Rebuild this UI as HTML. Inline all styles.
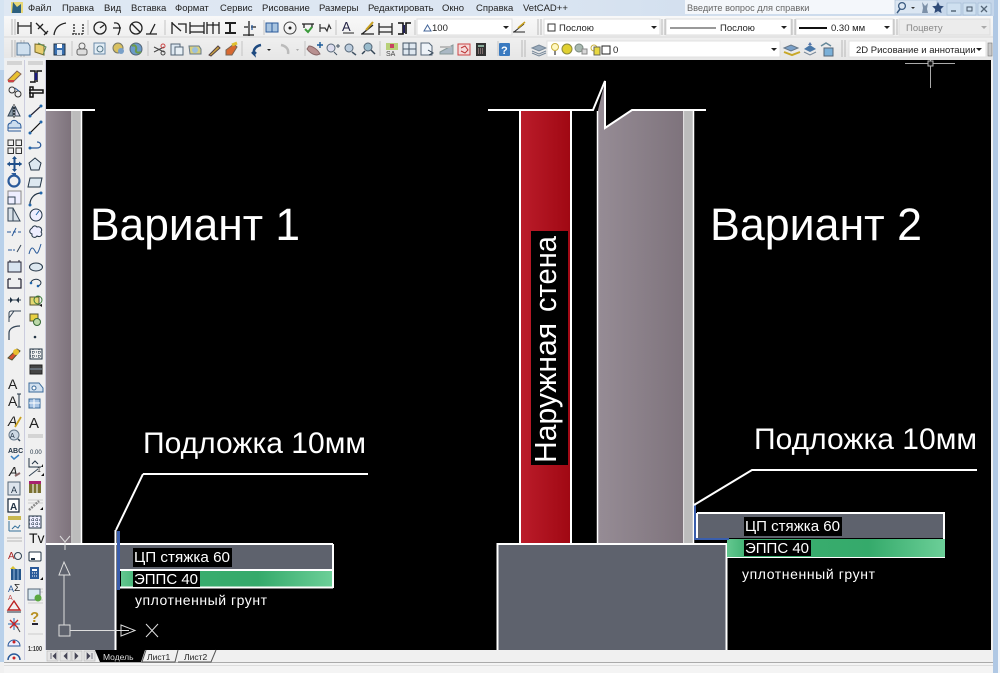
<!DOCTYPE html>
<html><head><meta charset="utf-8"><style>
html,body{margin:0;padding:0;background:#f0f0f0;width:1000px;height:673px;overflow:hidden}
svg{display:block;filter:blur(.35px)}
text{font-family:"Liberation Sans",sans-serif}
.m{font-size:9.5px;fill:#222}
.i{fill:none;stroke:#222;stroke-width:1.3}
.w{stroke:#fff;stroke-width:2;fill:none}
.u{stroke:#ddd;stroke-width:1;fill:none}
</style></head><body>
<svg width="1000" height="673" viewBox="0 0 1000 673" xmlns="http://www.w3.org/2000/svg">
<defs>
<linearGradient id="mb" x1="0" x2="1" y1="0" y2="0"><stop offset="0" stop-color="#dfe8f3"/><stop offset=".5" stop-color="#dce6f2"/><stop offset="1" stop-color="#c5d6ea"/></linearGradient>
<linearGradient id="tb" x1="0" x2="0" y1="0" y2="1"><stop offset="0" stop-color="#f8f8f8"/><stop offset="1" stop-color="#e6e6e6"/></linearGradient>
<linearGradient id="wl" x1="0" x2="1" y1="0" y2="0"><stop offset="0" stop-color="#968c95"/><stop offset="1" stop-color="#7e737c"/></linearGradient>
<linearGradient id="rd" x1="0" x2="1" y1="0" y2="0"><stop offset="0" stop-color="#bb1c2a"/><stop offset="1" stop-color="#a00813"/></linearGradient>
<linearGradient id="gr" x1="0" x2="1" y1="0" y2="0"><stop offset="0" stop-color="#64c890"/><stop offset=".1" stop-color="#3cae70"/><stop offset=".65" stop-color="#35aa6b"/><stop offset="1" stop-color="#6ccf98"/></linearGradient>
</defs>

<!-- window frame -->
<rect width="1000" height="673" fill="#f0f0f0"/>
<rect x="0" y="0" width="5" height="662" fill="#b9d1ea"/>
<rect x="993" y="0" width="5" height="673" fill="#b0c8e4"/>
<rect x="998" y="0" width="2" height="673" fill="#f4f7fb"/>
<rect x="0" y="0" width="5" height="70" fill="#d6e4f2"/>

<!-- menu -->
<rect x="4" y="0" width="990" height="16" fill="url(#mb)"/>
<rect x="11" y="2" width="12" height="11" fill="#e8d878"/>
<path d="M13 2l4 5 4-3v9H12z" fill="#2c5f7e"/>
<text class="m" y="11"><tspan x="28">Файл</tspan><tspan x="62">Правка</tspan><tspan x="104">Вид</tspan><tspan x="131">Вставка</tspan><tspan x="175">Формат</tspan><tspan x="220">Сервис</tspan><tspan x="262">Рисование</tspan><tspan x="319">Размеры</tspan><tspan x="368">Редактировать</tspan><tspan x="442">Окно</tspan><tspan x="476">Справка</tspan><tspan x="523">VetCAD++</tspan></text>
<rect x="685" y="0" width="210" height="14" fill="#f4f7fb"/>
<text x="687" y="11" font-size="9.2" fill="#666">Введите вопрос для справки</text>
<rect x="895" y="0" width="42" height="14" fill="#dbe6f2" stroke="#a8bcd4" stroke-width=".7"/>
<circle cx="902" cy="6" r="3.4" fill="none" stroke="#3a5a80" stroke-width="1.3"/><path d="M900 9l-3 4" stroke="#3a5a80" stroke-width="1.5"/>
<path d="M911 7h4l-2 2z" fill="#333"/>
<path d="M922 2l3 4 3-3-1 6 1 4h-6l1-5z" fill="#7c90a8"/>
<path d="M938 2l1.800 3.800 4 .5-3 2.800.8 4-3.600-2-3.600 2 .8-4-3-2.800 4-.5z" fill="#2f4b78"/>
<rect x="947" y="3" width="14" height="12" fill="#cfe0f0" stroke="#9fb6d0" stroke-width=".6"/><rect x="963" y="3" width="13" height="12" fill="#cfe0f0" stroke="#9fb6d0" stroke-width=".6"/><rect x="978" y="3" width="13" height="12" fill="#cfe0f0" stroke="#9fb6d0" stroke-width=".6"/>
<path d="M951 11h5" stroke="#456" stroke-width="1.300"/><rect x="967" y="7" width="5" height="4" fill="none" stroke="#456"/><path d="M981 6l6 6m0-6l-6 6" stroke="#567" stroke-width="1.300"/>

<!-- toolbars bg -->
<rect x="4" y="16" width="989" height="44" fill="url(#tb)"/>
<path d="M4 37h989" stroke="#d8d8d8"/>
<path d="M12 19v16M15 19v16M12 40v17M15 40v17M538 19v16M541 19v16M662 19v16M665 19v16M792 19v16M795 19v16M894 19v16M897 19v16M21 40v17M24 40v17M522 40v17M525 40v17M842 40v17M845 40v17" stroke="#b8b8b8"/>
<path d="M88 20v15M165 20v15M264 20v15M336 20v15M415 20v15M72 41v15M148 41v15M242 41v15M305 41v15M380 41v15M498 41v15" stroke="#c4c4c4"/>

<!-- toolbar 1 icons -->
<g class="i">
<path d="M18 22v12M31 22v12M18 26h13"/>
<path d="M36 23l11 11M38 29l5-5M44 35l4-4"/>
<path d="M54 35c1-8 6-11 12-12"/>
<path d="M72 34h12M74 24v10M83 24v10" stroke-dasharray="2 1"/>
<circle cx="100" cy="28" r="6"/><path d="M100 28l4-3"/>
<path d="M114 23c5-1 8 4 4 12M113 28h8"/>
<circle cx="136" cy="28" r="6"/><path d="M132 24l8 8"/>
<path d="M146 34h11M150 34l5-10"/>
<path d="M172 22v12M178 24h8v9"/><path d="M172 23l9 8z" fill="#d8b820"/>
<path d="M190 22v12M204 22v12M190 26h14"/><path d="M190 32h14"/>
<path d="M207 22v12M213 22v12M219 22v12M207 25h12"/>
<path d="M225 23h11M225 33h11M230 23v10" stroke-width="2"/>
<path d="M249 21v15M243 35h11M244 27h4M251 27h5" /><path d="M252 25v5" stroke="#2a5a9a"/>
</g>
<g>
<rect x="266" y="23" width="12" height="9" fill="#a8c4e0" stroke="#2a5a9a"/><path d="M272 23v9" stroke="#2a5a9a"/>
<circle cx="290" cy="28" r="6" fill="none" stroke="#444"/><circle cx="290" cy="28" r="1.500" fill="#222"/>
<path d="M302 24h12M304 24v4M312 24v4" stroke="#222" stroke-width="1.300" fill="none"/><path d="M305 29l3 3 4-5" stroke="#3a9a3a" stroke-width="2" fill="none"/>
<path d="M320 24v8M320 28h5l2 3 2-6 2 4" stroke="#333" fill="none" stroke-width="1.200"/>
<text x="342" y="31" font-size="13" fill="#224">A</text><path d="M343 33h11" stroke="#222"/>
<path d="M361 34h13M362 34l11-9" stroke="#222" stroke-width="1.300" fill="none"/><path d="M366 30l7-8" stroke="#c8a020" stroke-width="2"/>
<path d="M379 23v12M392 23v12M379 27h13M379 32h13" stroke="#222" stroke-width="1.300" fill="none"/>
<path d="M398 23h5v11h-5M411 23h-5v11" fill="none" stroke="#111" stroke-width="1.600"/><path d="M404 25v8" stroke="#225" stroke-width="2"/>
</g>
<rect x="417" y="19" width="95" height="16" fill="#fff" stroke="#ddd"/>
<path d="M424 31l3.500-6 3.500 6z" fill="none" stroke="#44669a"/>
<text x="432" y="31" font-size="9.500" fill="#222">100</text>
<path d="M503 26h6l-3 3z" fill="#222"/>
<path d="M513 32h12M514 32l10-8" stroke="#222" fill="none"/><path d="M518 28l7-6" stroke="#c8a020" stroke-width="1.500"/>

<!-- layer property combos -->
<rect x="544" y="19" width="116" height="16" fill="#fff" stroke="#ddd"/>
<rect x="548" y="24" width="7" height="7" fill="#fff" stroke="#333"/>
<text x="559" y="31" font-size="9.500" fill="#222">Послою</text>
<path d="M651 26h6l-3 3z" fill="#222"/>
<rect x="666" y="19" width="125" height="16" fill="#fff" stroke="#ddd"/>
<path d="M670 28h46" stroke="#333"/>
<text x="720" y="31" font-size="9.500" fill="#222">Послою</text>
<path d="M781 26h6l-3 3z" fill="#222"/>
<rect x="796" y="19" width="97" height="16" fill="#fff" stroke="#ddd"/>
<path d="M799 28h28" stroke="#111" stroke-width="2"/>
<text x="831" y="31" font-size="9.500" fill="#222">0.30 мм</text>
<path d="M884 26h6l-3 3z" fill="#222"/>
<rect x="899" y="19" width="91" height="16" fill="#ececec" stroke="#ddd"/>
<text x="906" y="31" font-size="9.500" fill="#888">Поцвету</text>
<path d="M981 26h6l-3 3z" fill="#aaa"/>

<!-- toolbar 2 icons -->
<g>
<path d="M17 43h11l2 3v9H17z" fill="#cfe0ef" stroke="#5a7a9a"/>
<path d="M35 44l9 1v10l-9-3z" fill="#e8cf70" stroke="#7a6a2a"/><path d="M38 43l8 4-3 8" fill="none" stroke="#5a8a5a"/>
<rect x="54" y="44" width="11" height="11" fill="#3a70b0" stroke="#234"/><rect x="57" y="44" width="5" height="4" fill="#fff"/><rect x="57" y="50" width="5" height="5" fill="#cde"/>
<circle cx="82" cy="46" r="3" fill="none" stroke="#666"/><rect x="77" y="49" width="10" height="6" rx="2" fill="#ddd" stroke="#666"/>
<rect x="94" y="43" width="11" height="11" fill="#e4eef6" stroke="#6a8aa8"/><circle cx="100" cy="49" r="3" fill="none" stroke="#578"/>
<circle cx="118" cy="48" r="5" fill="#d8c060" stroke="#776"/><circle cx="121" cy="51" r="3" fill="#7aa0c8"/>
<circle cx="136" cy="49" r="6" fill="#6a9ac8" stroke="#567"/><path d="M132 46c3-2 5 1 4 4-1 3 3 3 5 2" stroke="#6a9a4a" stroke-width="2" fill="none"/>
<path d="M154 47l10 5M154 52l10-5" stroke="#444" fill="none"/><circle cx="163" cy="46" r="2" fill="none" stroke="#c44"/><circle cx="163" cy="53" r="2" fill="none" stroke="#444"/>
<rect x="171" y="44" width="9" height="11" fill="#dde8f2" stroke="#567"/><rect x="175" y="47" width="8" height="8" fill="#e8f0f6" stroke="#567"/>
<path d="M189 46h10l2 3v5h-11z" fill="#d8d080" stroke="#678"/><circle cx="195" cy="50" r="3" fill="#9cc0dc"/>
<path d="M209 55l9-9 2 2-9 8z" fill="#c8a040" stroke="#544"/>
<path d="M226 50l8-6 3 3-5 8h-6z" fill="#d86830" stroke="#765"/><path d="M232 45l5-2" stroke="#e0c030" stroke-width="3"/>
<path d="M261 45c-5 1-8 4-7 9l-2-2m2 2l2-2" fill="none" stroke="#1e4a80" stroke-width="2.500"/>
<path d="M267 49h4l-2 2z" fill="#222"/>
<path d="M281 45c5 1 8 4 7 9" fill="none" stroke="#bbb" stroke-width="2.500"/>
<path d="M296 49h3l-1.500 2z" fill="#aaa"/>
<path d="M309 46c4 0 9 4 11 8l-3 1c-4 0-8-3-10-6z" fill="#b89090" stroke="#866"/><path d="M317 45h6m-3-3v6" stroke="#1a5a9a" stroke-width="1.400"/>
<circle cx="331" cy="48" r="4" fill="#dde" stroke="#567"/><path d="M334 52l3 3M336 46h4m-2-2v4" stroke="#456"/>
<circle cx="349" cy="48" r="4" fill="#bcd" stroke="#567"/><path d="M352 52l4 3" stroke="#456" stroke-width="1.500"/>
<circle cx="368" cy="47" r="4" fill="#9bc" stroke="#567"/><path d="M365 51l-3 3M371 50l4 4" stroke="#345" stroke-width="1.500"/>
<rect x="386" y="43" width="12" height="7" fill="#b8d078"/><rect x="390" y="44" width="4" height="4" fill="#c84060"/><text x="386" y="56" font-size="7" fill="#444">SA</text>
<rect x="403" y="43" width="13" height="12" fill="#dfe8f0" stroke="#456"/><path d="M403 49h13M409 43v12" stroke="#456"/>
<path d="M421 43h8l3 3v9h-11z" fill="#eef3f8" stroke="#567"/><path d="M428 50l5 3-4 2" stroke="#345" fill="none"/>
<path d="M440 52l13-7v9h-13z" fill="#aab8c4" stroke="#899"/><path d="M440 47h11" stroke="#bbb" stroke-width="2"/>
<rect x="458" y="44" width="12" height="11" fill="#f4dada" stroke="#c44"/><path d="M461 48l4-2 3 4-3 3-4-2" stroke="#b33" fill="none"/>
<rect x="476" y="43" width="10" height="13" fill="#333"/><rect x="478" y="45" width="6" height="2" fill="#8a9"/><path d="M478 49h6M478 51h6M478 53h6" stroke="#caa" stroke-dasharray="1 1"/>
<rect x="499" y="43" width="11" height="13" rx="1" fill="#3a7ac0"/><text x="501" y="54" font-size="11" font-weight="bold" fill="#fff">?</text>
<path d="M532 48l7-3 7 3-7 3z" fill="#9ab" stroke="#789"/><path d="M532 51l7 3 7-3M532 53l7 3 7-3" stroke="#789" fill="none"/>
</g>
<rect x="547" y="41" width="233" height="16" fill="#fff" stroke="#e0e0e0"/>
<circle cx="555" cy="47" r="3.500" fill="#fff8c0" stroke="#c8b040"/><path d="M555 51v4" stroke="#888" stroke-width="2"/>
<circle cx="567" cy="49" r="5" fill="#e0d030" stroke="#8a8a40"/>
<circle cx="579" cy="48" r="4" fill="#a8b8b0" stroke="#7a8a80"/><rect x="582" y="49" width="5" height="5" fill="#d8d8d8" stroke="#888"/>
<circle cx="594" cy="48" r="3" fill="none" stroke="#c8b040"/><rect x="594" y="47" width="6" height="8" fill="#e8d840" stroke="#665"/>
<rect x="602" y="46" width="8" height="8" fill="#fff" stroke="#222"/>
<text x="613" y="53" font-size="9.500" fill="#222">0</text>
<path d="M771 48h6l-3 3z" fill="#222"/>
<path d="M784 48l7-3 7 3-7 3z" fill="#7aa0c8" stroke="#678"/><path d="M784 52l8 3 8-3" stroke="#c8a828" stroke-width="2" fill="none"/>
<path d="M804 49l6-4 6 4-6 3z" fill="#4a78a8"/><path d="M804 52l6 3 6-3" stroke="#789" fill="none"/><path d="M808 45l2-3 2 3" fill="#57a"/>
<rect x="824" y="48" width="9" height="8" fill="#7ab0d8" stroke="#567"/><path d="M821 46l5-3 5 3" fill="none" stroke="#689" stroke-width="1.500"/>
<rect x="849" y="41" width="137" height="16" fill="#fff" stroke="#e0e0e0"/>
<text x="856" y="53" font-size="9.500" fill="#222">2D Рисование и аннотации</text>
<path d="M976 48h6l-3 3z" fill="#222"/>
<rect x="988" y="43" width="4" height="13" fill="#c8c8c8" stroke="#777" stroke-width=".6"/>

<!-- left palette -->
<rect x="4" y="58" width="42" height="604" fill="#ecf0f4"/>
<rect x="5" y="60" width="19" height="602" fill="#f0f0f0"/>
<rect x="26" y="60" width="19" height="602" fill="#f0f0f0"/>
<path d="M24.500 60v600M45.500 60v590" stroke="#ccd" stroke-width="1"/>
<path d="M7 62h15M7 64h15M28 62h15M28 64h15" stroke="#b8b8b8"/>

<!-- col 1 icons -->
<g>
<path d="M8 80l9-9 4 3-8 8h-4z" fill="#e8c030" stroke="#865"/><path d="M8 81h6" stroke="#c44" stroke-width="2"/>
<circle cx="12" cy="90" r="3" fill="none" stroke="#333"/><circle cx="18" cy="94" r="3" fill="none" stroke="#333"/><path d="M15 88l4 3" stroke="#2a5a9a"/>
<path d="M14 104v14" stroke="#333" stroke-dasharray="2 1"/><path d="M13 106l-5 10h5z" fill="#8a9aa8" stroke="#345"/><path d="M15 106l5 10h-5z" fill="#dde" stroke="#345"/>
<path d="M8 131v-5c0-3 3-3 3-3 0-3 5-4 7 0 3 0 3 3 3 5h-13zM8 131h13" fill="#cde" stroke="#2a5a9a"/>
<g fill="none" stroke="#333"><rect x="8" y="140" width="5.500" height="5.500"/><rect x="16" y="140" width="5.500" height="5.500"/><rect x="8" y="148" width="5.500" height="5.500"/><rect x="16" y="148" width="5.500" height="5.500"/></g>
<path d="M14.500 157v14M7.500 164h14" stroke="#1f4f8a" stroke-width="2"/><path d="M14.500 156l-2.500 3h5zM14.500 172l-2.500-3h5zM7 164l3-2.500v5zM22 164l-3-2.500v5z" fill="#1f4f8a"/>
<circle cx="14" cy="181" r="5.500" fill="none" stroke="#2a5a9a" stroke-width="2.200"/><path d="M11 173h5v4z" fill="#2a5a9a"/>
<rect x="8" y="191" width="13" height="13" fill="#eef" stroke="#888"/><rect x="8" y="197" width="7" height="7" fill="none" stroke="#345"/>
<path d="M8 221v-13h5l7 13z" fill="#d8e0e8" stroke="#345"/><path d="M13 208v13" stroke="#345"/>
<path d="M7 232h4m2 0h3m2 0h3" stroke="#2a5a9a"/><path d="M16 228l-4 8" stroke="#2a5a9a"/>
<path d="M8 250h4m1 0h2" stroke="#2a5a9a"/><path d="M17 252l4-7" stroke="#345"/>
<rect x="8" y="262" width="13" height="10" fill="#d8e4f0" stroke="#223"/><path d="M10 262v-2M19 262v-2" stroke="#223"/>
<path d="M8 279v9h13v-9M8 279h3M21 279h-3" fill="none" stroke="#223" stroke-width="1.200"/>
<path d="M8 300h13" stroke="#345"/><path d="M10 297l3 3-3 3zM19 297l-3 3 3 3z" fill="#234"/>
<path d="M9 322v-9c0-1 1-2 2-2h10M9 318l5-7" fill="none" stroke="#345"/>
<path d="M9 340v-7c0-4 4-7 11-7" fill="none" stroke="#345" stroke-width="1.200"/>
<path d="M8 358l9-9 3 2-8 9z" fill="#d85030" stroke="#553"/><circle cx="16" cy="352" r="3" fill="#e8c030"/>
</g>
<!-- col 2 icons -->
<g>
<path d="M30 71h5v11h-5M42 71h-5v11" fill="none" stroke="#111" stroke-width="1.500"/><path d="M36 73v7" stroke="#1a1a80" stroke-width="2.400"/>
<path d="M29 90h14v3h-14M33 90v-3h-3v10h3v-4" fill="none" stroke="#111" stroke-width="1.500"/>
<path d="M30 116l11-10" stroke="#223" stroke-width="1.200"/><circle cx="30" cy="116" r="1.500" fill="#26a"/><circle cx="41" cy="106" r="1.500" fill="#26a"/>
<path d="M30 133l11-11" stroke="#111" stroke-width="1.200"/><circle cx="30" cy="133" r="1.500" fill="#26a"/><circle cx="41" cy="122" r="1.500" fill="#26a"/>
<path d="M29 148h8c5 0 5-6 0-6" fill="none" stroke="#2a5a9a" stroke-width="1.300"/><circle cx="30" cy="148" r="1.500" fill="#26a"/>
<path d="M35 158l6 5-2 7h-8l-2-7z" fill="#dde8f0" stroke="#234"/>
<path d="M30 178h12l-2 9h-12z" fill="#dde8f0" stroke="#234"/>
<path d="M30 204c0-6 5-11 11-11" fill="none" stroke="#234" stroke-width="1.200"/><circle cx="30" cy="205" r="1.500" fill="#26a"/><circle cx="41" cy="193" r="1.500" fill="#26a"/>
<circle cx="36" cy="215" r="6" fill="#eef" stroke="#234"/><path d="M36 215l3-4" stroke="#26a"/>
<path d="M32 228c-3 2-3 5 0 6-1 4 4 4 5 2 4 2 6-2 4-4 2-3-1-6-4-5-2-2-4-1-5 1z" fill="#eef" stroke="#234"/>
<path d="M29 254c2-8 4-7 6-3s3 3 6-7" fill="none" stroke="#2a5a9a"/>
<ellipse cx="36" cy="267" rx="6.500" ry="4" fill="#dde8f0" stroke="#234"/>
<path d="M31 283a5 3.500 0 1 1 7 3" fill="none" stroke="#234"/><circle cx="31" cy="283" r="1.300" fill="#26a"/><circle cx="38" cy="286" r="1.300" fill="#26a"/>
<rect x="30" y="297" width="9" height="8" fill="#e4d870" stroke="#553"/><circle cx="38" cy="300" r="4" fill="none" stroke="#3a7a3a"/><path d="M39 305l3 2v-3z" fill="#111"/>
<rect x="30" y="314" width="8" height="7" fill="#e8d040" stroke="#553"/><circle cx="37" cy="322" r="3.500" fill="#bcd8a8" stroke="#363"/>
<circle cx="35" cy="337" r="1.300" fill="#234"/>
<g fill="none" stroke="#234"><rect x="30" y="349" width="12" height="10"/><path d="M30 352h12M30 356h12M33 349v10M39 349v10" stroke-dasharray="1 1"/></g>
<rect x="30" y="365" width="12" height="9" fill="#444" stroke="#222"/><path d="M30 369h12" stroke="#89a"/>
<path d="M29 383h10l4 5v4H29z" fill="#d0dfee" stroke="#3a6a9a"/><circle cx="34" cy="388" r="2" fill="#fff" stroke="#3a6a9a"/>
<rect x="29" y="399" width="11" height="9" fill="#a8c4e4" stroke="#3a6a9a"/><path d="M29 403h11M34 399v9" stroke="#fff"/>
<text x="29" y="428" font-size="15" fill="#222">A</text>
</g>
<path d="M28 435h15M28 437h15" stroke="#b8b8b8"/>
<g>
<text x="8" y="389" font-size="14" fill="#222">A</text>
<text x="8" y="406" font-size="14" fill="#222">A</text><path d="M19 394v13M17 394h4M17 407h4" stroke="#234" fill="none"/>
<text x="8" y="426" font-size="14" font-style="italic" fill="#222">A</text><path d="M15 427l6-10" stroke="#c8a020" stroke-width="1.800"/>
<circle cx="14" cy="435" r="5" fill="#cdd8e4" stroke="#678"/><text x="10" y="438" font-size="7" fill="#234">A</text><path d="M18 439l2 2" stroke="#345" stroke-width="1.500"/>
<text x="8" y="453" font-size="7" font-weight="bold" fill="#234">ABC</text><path d="M11 456l3 3 5-4" stroke="#3a80c0" stroke-width="1.500" fill="none"/>
<text x="9" y="476" font-size="13" fill="#222" font-style="italic">A</text><path d="M15 476l5-3" stroke="#866" stroke-width="2"/>
<rect x="8" y="482" width="12" height="13" fill="#dde4ec" stroke="#567"/><text x="11" y="493" font-size="9" fill="#234">A</text>
<rect x="8" y="499" width="11" height="13" fill="#fff" stroke="#234" stroke-width="1.300"/><text x="10" y="510" font-size="10" fill="#234" font-weight="bold">A</text>
<rect x="8" y="516" width="13" height="4" fill="#c8b850"/><path d="M9 531v-10M9 531h12M12 529l3-3 3 2 2-3" stroke="#34709a" fill="none"/>
</g>
<path d="M7 538h15M7 541h15" stroke="#b8b8b8"/>
<g>
<text x="8" y="559" font-size="10" fill="#a22">A</text><circle cx="18" cy="556" r="3.500" fill="none" stroke="#345"/>
<path d="M10 569l3-3 3 3" fill="#d8c030"/><rect x="11" y="569" width="10" height="11" fill="#24558a"/><path d="M14 569v11M18 569v11" stroke="#9bd"/>
<text x="8" y="592" font-size="9" fill="#2a5a9a">A</text><text x="14" y="591" font-size="10" fill="#222">Σ</text><text x="8" y="600" font-size="7" fill="#b44">A</text>
<path d="M8 610l6-9 6 9z" fill="none" stroke="#b22" stroke-width="1.400"/><path d="M7 612h14" stroke="#234"/>
<path d="M8 624h12M14 618v12" stroke="#26a"/><path d="M10 620l8 8m0-8l-8 8" stroke="#c22" stroke-width="1.400"/><path d="M17 627l3 5" stroke="#444"/>
<path d="M8 646a6 6 0 0 1 12 0z" fill="#eef" stroke="#2a5a9a"/><circle cx="14" cy="642" r="1.500" fill="#c22"/>
<path d="M8 660a6 6 0 0 1 12 0" fill="none" stroke="#2a5a9a" stroke-width="1.500"/><circle cx="14" cy="658" r="1.500" fill="#c22"/>
<path d="M28 500h15M28 503h15M28 589h15M28 592h15M28 600h15M28 603h15M28 634h15" stroke="#ccc"/>
<path d="M29 458v9h12M32 464l3-3 3 3" fill="none" stroke="#234"/><text x="30" y="454" font-size="6" fill="#234">0.00</text><path d="M41 467l2-3v3z" fill="#111"/>
<path d="M29 476l9-7" stroke="#345"/><text x="37" y="472" font-size="7" fill="#222">1</text><path d="M41 476l3-3v3z" fill="#111"/>
<rect x="29" y="481" width="12" height="12" fill="#7a7030"/><rect x="29" y="481" width="12" height="3" fill="#a82070"/><path d="M33 484v9M37 484v9" stroke="#fff"/>
<path d="M29 510l10-9" stroke="#888" stroke-width="2.500" stroke-dasharray="2 1"/><path d="M40 510l3-3v3z" fill="#111"/>
<rect x="29" y="516" width="12" height="12" fill="#eef" stroke="#234"/><path d="M33 516v12M37 516v12M29 520h12M29 524h12" stroke="#234" stroke-dasharray="1 1"/>
<text x="29" y="543" font-size="14" font-family="Liberation Serif" fill="#111">Tv</text>
<rect x="29" y="552" width="12" height="9" rx="1" fill="#fff" stroke="#234"/><rect x="31" y="558" width="4" height="2" fill="#234"/>
<rect x="30" y="567" width="9" height="12" fill="#2a5a9a"/><rect x="32" y="569" width="5" height="2" fill="#fff"/><path d="M32 573h5M32 576h5" stroke="#fff" stroke-dasharray="1 1"/><path d="M40 580l3-3v3z" fill="#111"/>
<rect x="28" y="589" width="12" height="11" fill="#d8e8f0" stroke="#567"/><circle cx="38" cy="598" r="3.500" fill="#5aa840"/>
<text x="30" y="622" font-size="15" font-weight="bold" fill="#b89020">?</text><path d="M32 624h6" stroke="#223" stroke-width="2"/>
<text x="28" y="651" font-size="7.500" font-weight="bold" fill="#333" textLength="14" lengthAdjust="spacingAndGlyphs">1:100</text>
</g>

<!-- canvas -->
<rect x="46" y="60" width="945" height="590" fill="#000"/>

<!-- crosshair -->
<path d="M905 63.500h50M930.500 60v28" stroke="#aaa"/><rect x="928" y="61" width="5" height="5" fill="#111" stroke="#bbb"/>

<!-- left drawing -->
<rect x="46" y="110" width="25" height="434" fill="url(#wl)"/>
<rect x="73" y="110" width="8" height="434" fill="#bcbcbc"/>
<path class="w" d="M46 110h49"/>
<path d="M72 110v434M81.500 110v434" stroke="#fff" stroke-width="1.500"/>
<rect x="46" y="544" width="69" height="106" fill="#5e626d"/>
<path class="w" d="M46 544h287M115.500 530v120M143 474h225M116 530l27-56"/>
<rect x="120" y="545" width="212" height="24" fill="#5e626d"/>
<rect x="121" y="571" width="211" height="16" fill="url(#gr)"/>
<path class="w" d="M120 570h212M333 544v44M120 587.500h213"/>
<path d="M118.500 531v59" stroke="#3a5eac" stroke-width="3"/>
<rect x="133" y="548" width="99" height="19" fill="#000"/>
<text x="134" y="562" font-size="15" fill="#fff" textLength="96" lengthAdjust="spacingAndGlyphs">ЦП стяжка 60</text>
<rect x="133" y="571" width="67" height="16" fill="#000"/>
<text x="134" y="584" font-size="15" fill="#fff" textLength="64" lengthAdjust="spacingAndGlyphs">ЭППС 40</text>
<text x="135" y="605" font-size="14" fill="#fff" textLength="132">уплотненный грунт</text>
<text x="90" y="240" font-size="45" fill="#fff" textLength="210" lengthAdjust="spacingAndGlyphs">Вариант 1</text>
<text x="143" y="453" font-size="30" fill="#fff" textLength="223" lengthAdjust="spacingAndGlyphs">Подложка 10мм</text>

<!-- UCS -->
<g class="u">
<path d="M60 536l5 6 5-6M65 542v8M64 575v50"/>
<path d="M64 562l-5 13h11z"/>
<rect x="59" y="625" width="11" height="11"/>
<path d="M70 630.500h51M121 625l14 5.500-14 5.500zM121 630.500h8M146 624l12 13M158 624l-12 13"/>
</g>

<!-- right drawing -->
<rect x="521" y="111" width="49" height="433" fill="url(#rd)"/>
<path class="w" d="M520 110v434M571 110v434"/>
<path d="M598 110l7-28v46l27-18h52v434h-86z" fill="url(#wl)"/>
<rect x="685" y="110" width="8" height="434" fill="#bcbcbc"/>
<path class="w" d="M488 110h105l12-29v47l27-18h74"/>
<path d="M597.500 111v433M684 110v434M693.500 110v434" stroke="#fff" stroke-width="1.500"/>
<rect x="531" y="231" width="37" height="234" fill="#000"/>
<text transform="translate(556,463) rotate(-90)" font-size="31" fill="#fff" textLength="140" lengthAdjust="spacingAndGlyphs">Наружная</text>
<text transform="translate(556,312) rotate(-90)" font-size="31" fill="#fff" textLength="76" lengthAdjust="spacingAndGlyphs">стена</text>
<rect x="497" y="544" width="230" height="106" fill="#5e626d"/>
<path class="w" d="M497.500 650v-106h229v106"/>
<rect x="698" y="514" width="245" height="24" fill="#5e626d"/>
<rect x="727" y="539" width="218" height="18" fill="url(#gr)"/>
<path class="w" d="M697 513h247v26M697 513v25"/>
<path d="M727 557.500h218" stroke="#fff"/>
<path d="M695 505v34h34" stroke="#3a5eac" stroke-width="2" fill="none"/>
<path class="w" d="M694 505l58-35h225"/>
<rect x="744" y="517" width="98" height="19" fill="#000"/>
<text x="745" y="531" font-size="15" fill="#fff" textLength="95" lengthAdjust="spacingAndGlyphs">ЦП стяжка 60</text>
<rect x="744" y="540" width="67" height="16" fill="#000"/>
<text x="745" y="553" font-size="15" fill="#fff" textLength="64" lengthAdjust="spacingAndGlyphs">ЭППС 40</text>
<text x="742" y="579" font-size="14" fill="#fff" textLength="133">уплотненный грунт</text>
<text x="710" y="240" font-size="45" fill="#fff" textLength="212" lengthAdjust="spacingAndGlyphs">Вариант 2</text>
<text x="754" y="449" font-size="30" fill="#fff" textLength="223" lengthAdjust="spacingAndGlyphs">Подложка 10мм</text>

<!-- tabs -->
<rect x="46" y="650" width="945" height="13" fill="#f0f0f0"/>
<path d="M4 662.500h989" stroke="#aaa"/>
<rect x="4" y="663" width="989" height="10" fill="#f4f4f4"/>
<path d="M4 665.500h989" stroke="#ddd"/>
<g fill="#e4e4e4" stroke="#bbb" stroke-width=".7"><rect x="47" y="651" width="11" height="10"/><rect x="60" y="651" width="11" height="10"/><rect x="72" y="651" width="10" height="10"/><rect x="84" y="651" width="11" height="10"/></g>
<path d="M51 653v6M56 653l-3 3 3 3zM67 653l-3 3 3 3zM75 653l3 3-3 3zM87 653l3 3-3 3zM92 653v6" fill="#445" stroke="#445" stroke-width=".7"/>
<path d="M95 650h50l-4 12h-41z" fill="#000"/>
<text x="103" y="660" font-size="8.500" fill="#ddd">Модель</text>
<path d="M146 650l-4 12h33l3-12M178 662h33l5-12" fill="none" stroke="#555"/>
<text x="147" y="660" font-size="8.500" fill="#222">Лист1</text>
<text x="184" y="660" font-size="8.500" fill="#222">Лист2</text>
</svg>
</body></html>
